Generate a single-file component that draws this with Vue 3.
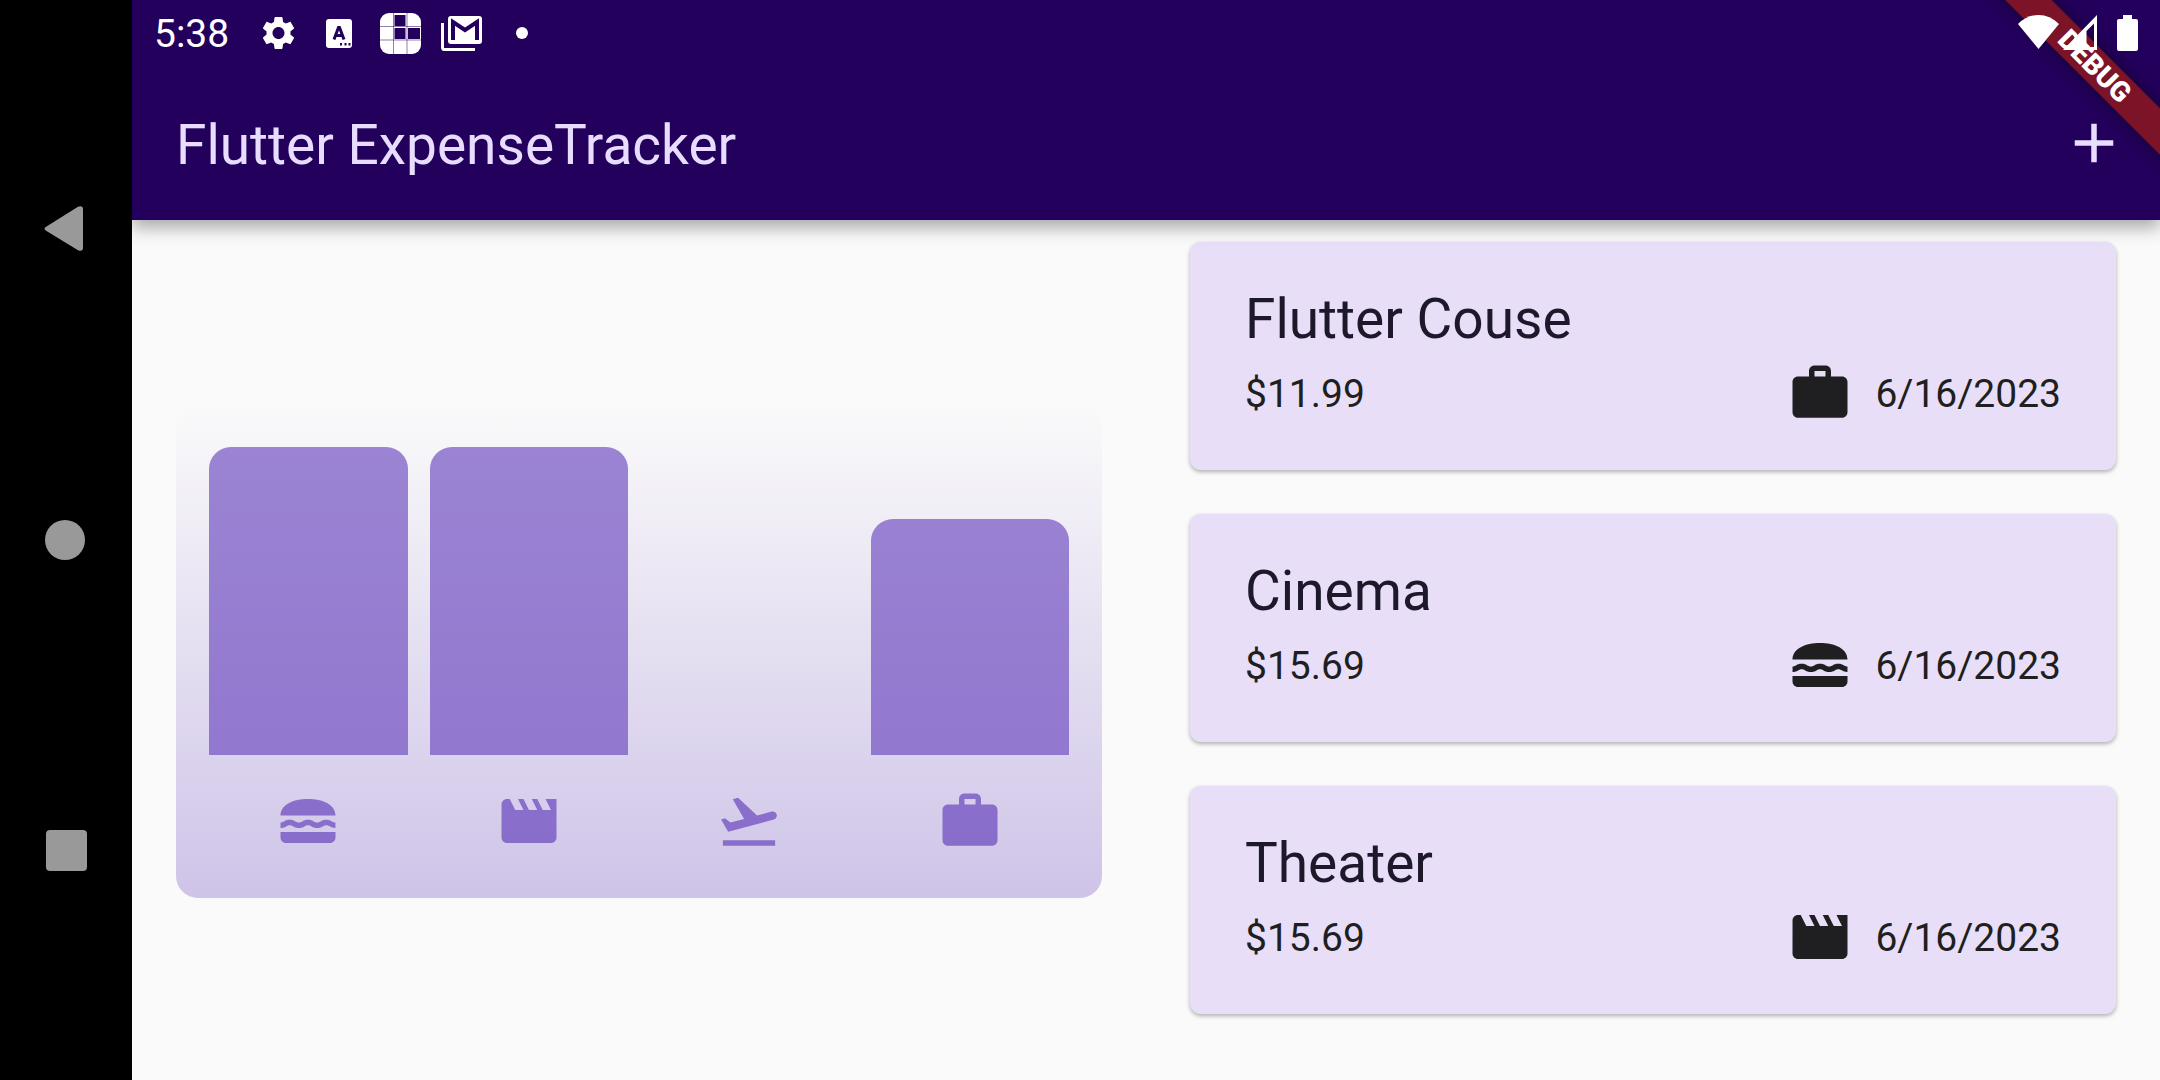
<script setup>
const icons = {
  food: 'M2 16h20v2c0 1.100-.9 2-2 2H4c-1.100 0-2-.9-2-2v-2zM18.660 11.500c-1.950 0-2.090 1-3.330 1-1.190 0-1.420-1-3.330-1-1.950 0-2.090 1-3.330 1-1.190 0-1.420-1-3.330-1-1.950 0-2.090 1-3.330 1v2c1.900 0 2.170-1 3.350-1 1.190 0 1.420 1 3.330 1 1.950 0 2.090-1 3.330-1 1.190 0 1.420 1 3.330 1 1.950 0 2.090-1 3.330-1 1.190 0 1.400.98 3.310 1v-1.980c-1.190 0-1.420-1.020-3.340-1.020zM22 9.990C22.020 6 17.280 4 12 4S2 6 2 10h20z',
  leisure: 'M18 4l2 4h-3l-2-4h-2l2 4h-3l-2-4H8l2 4H7L5 4H4c-1.100 0-1.990.9-1.990 2L2 18c0 1.100.9 2 2 2h16c1.100 0 2-.9 2-2V4h-4z',
  travel: 'M2.500 19h19v2h-19v-2zm19.570-9.360c-.21-.8-1.040-1.280-1.840-1.060L14.920 10l-6.900-6.430-1.930.51 4.140 7.170-4.970 1.330-1.970-1.540-1.450.39 2.590 4.490L21 11.490c.81-.23 1.280-1.050 1.070-1.850z',
  work: 'M20 6h-4V4c0-1.110-.89-2-2-2h-4c-1.110 0-2 .89-2 2v2H4c-1.110 0-2 .89-2 2v11c0 1.110.89 2 2 2h16c1.110 0 2-.89 2-2V8c0-1.110-.89-2-2-2zm-6 0h-4V4h4v2z',
}

const expenses = [
  { title: 'Flutter Couse', amount: 11.99, category: 'work', date: '6/16/2023' },
  { title: 'Cinema', amount: 15.69, category: 'food', date: '6/16/2023' },
  { title: 'Theater', amount: 15.69, category: 'leisure', date: '6/16/2023' },
]

const totals = ['food', 'leisure', 'travel', 'work'].map((category) => ({
  category,
  total: expenses.filter((e) => e.category === category).reduce((sum, e) => sum + e.amount, 0),
}))
const maxTotal = Math.max(...totals.map((t) => t.total))
</script>

<template>
  <div class="device">
    <nav class="system-nav" aria-label="System navigation">
      <button type="button" aria-label="Back">
        <svg width="48" height="48" viewBox="0 0 48 48"><path d="M4.500 21.500L36 1.800Q41 0 41 4.500V42.500Q41 47 36 45.200L4.500 26Q.5 23.700 4.500 21.500Z" /></svg>
      </button>
      <button type="button" aria-label="Home">
        <svg width="48" height="48" viewBox="0 0 48 48"><circle cx="23" cy="24" r="20" /></svg>
      </button>
      <button type="button" aria-label="Overview">
        <svg width="48" height="48" viewBox="0 0 48 48"><rect x="4" y="3" width="41" height="41" rx="4" /></svg>
      </button>
    </nav>

    <div class="app">
      <header class="top">
        <div class="banner-clip"><div class="banner">DEBUG</div></div>
        <div class="status">
          <time>5:38</time>
          <div class="notifications">
            <svg viewBox="0 0 61 66">
              <path transform="translate(10.500 13) scale(1.667)" d="M19.140 12.940c.04-.3.06-.61.06-.94 0-.32-.02-.64-.07-.94l2.030-1.580c.18-.14.23-.41.12-.61l-1.920-3.320c-.12-.22-.37-.29-.59-.22l-2.390.96c-.5-.38-1.030-.7-1.620-.94l-.36-2.540c-.04-.24-.24-.41-.48-.41h-3.840c-.24 0-.43.17-.47.41l-.36 2.540c-.59.24-1.130.57-1.620.94l-2.390-.96c-.22-.08-.47 0-.59.22L2.740 8.870c-.12.21-.08.47.12.61l2.030 1.580c-.05.3-.09.63-.09.94s.02.64.07.94l-2.030 1.580c-.18.14-.23.41-.12.61l1.920 3.320c.12.22.37.29.59.22l2.390-.96c.5.38 1.030.7 1.620.94l.36 2.540c.05.24.24.41.48.41h3.840c.24 0 .44-.17.47-.41l.36-2.540c.59-.24 1.130-.56 1.620-.94l2.390.96c.22.08.47 0 .59-.22l1.920-3.320c.12-.22.07-.47-.12-.61l-2.010-1.580zM12 15.600c-1.980 0-3.600-1.620-3.600-3.600s1.620-3.600 3.600-3.600 3.600 1.620 3.600 3.600-1.620 3.600-3.600 3.600z" />
            </svg>
            <svg viewBox="0 0 61 66">
              <rect x="17" y="19" width="26" height="29" rx="3" />
              <path class="line" d="M25 39.500L29.500 27.500H30.500L35 39.500M27 35.500H33" stroke-width="3" />
              <path class="cut" d="M31 43h2v2.500h-2zM35.500 43h2v2.500h-2zM39.500 43h2v2.500h-2z" />
            </svg>
            <svg viewBox="0 0 61 66">
              <rect x="10" y="13" width="41" height="41" rx="9" />
              <path class="cut" d="M24.500 15h11v11h-11zM24.500 28h11v11h-11zM38 28h12v11H38z" />
              <path class="line" d="M23.500 13V54M37 13V54M10 26.500H51M10 40H51" stroke-width="1" opacity=".5" />
            </svg>
            <svg viewBox="0 0 61 66">
              <path d="M10 23v24q0 4 3 4h31v-3H13V23z" />
              <rect x="17" y="16" width="34" height="28" rx="3" />
              <path class="line" d="M22 40V22L34 30L46 22V40" stroke-width="4" />
            </svg>
            <svg viewBox="0 0 61 66"><circle cx="30" cy="33" r="6" /></svg>
          </div>
          <svg class="signals" viewBox="0 0 126 66">
            <path d="M24.500 49L4 24Q13 15 24.500 15T45 24Z" />
            <path fill-rule="evenodd" d="M49 50L83 15V50ZM72.500 31V47H80V23.500Z" />
            <path d="M109 15h9v4h4q2 0 2 2v28q0 2-2 2h-17q-2 0-2-2V21q0-2 2-2h4z" />
          </svg>
        </div>
        <div class="app-bar">
          <h1>Flutter ExpenseTracker</h1>
          <button type="button" aria-label="Add expense">
            <svg viewBox="0 0 24 24"><path d="M19 13h-6v6h-2v-6H5v-2h6V5h2v6h6v2z" /></svg>
          </button>
        </div>
      </header>

      <main class="content">
        <section class="chart" aria-label="Expenses by category">
          <div v-for="t in totals" :key="t.category" class="column">
            <div class="track">
              <div class="bar" :style="{ height: (t.total / maxTotal) * 100 + '%' }"></div>
            </div>
            <svg class="icon" viewBox="0 0 24 24"><path :d="icons[t.category]" /></svg>
          </div>
        </section>

        <ul class="list">
          <li v-for="e in expenses" :key="e.title" class="card">
            <h2>{{ e.title }}</h2>
            <div class="row">
              <span class="amount">${{ e.amount }}</span>
              <span class="when">
                <svg class="icon" viewBox="0 0 24 24"><path :d="icons[e.category]" /></svg>
                <time>{{ e.date }}</time>
              </span>
            </div>
          </li>
        </ul>
      </main>
    </div>
  </div>
</template>

<style>
body {
  background: #fafafa;
}
</style>

<style scoped>
.device {
  display: flex;
  min-height: 100vh;
  font-family: Roboto, sans-serif;
  font-size: 39px;
  color: #1f1f21;
}
button {
  display: flex;
  align-items: center;
  justify-content: center;
  padding: 0;
  border: 0;
  background: none;
}
svg {
  display: block;
  flex: none;
}
h1,
h2 {
  margin: 0;
  font-size: 55px;
  font-weight: 400;
  line-height: 67px;
}
time,
.amount {
  padding-top: 2px;
}
.icon {
  width: 66px;
  height: 66px;
}

.system-nav {
  flex: none;
  display: flex;
  flex-direction: column;
  box-sizing: border-box;
  width: 132px;
  padding: 73px 0;
  background: #000;
}
.system-nav button {
  flex: 1;
}
.system-nav svg {
  fill: #999;
}

.app {
  flex: 1;
  min-width: 0;
  display: flex;
  flex-direction: column;
  overflow: hidden;
}
.top {
  position: relative;
  background: #23005c;
  color: #e8ddff;
  box-shadow: 0 8px 16px rgba(0, 0, 0, 0.32);
}
.status {
  position: relative;
  display: flex;
  align-items: center;
  height: 66px;
  padding: 0 20px 0 22px;
  color: #fff;
}
.status svg {
  fill: #fff;
}
.notifications {
  display: flex;
  flex: 1;
  padding-left: 19px;
}
.notifications svg {
  width: 61px;
  height: 66px;
}
.notifications .cut {
  fill: #23005c;
}
.notifications .line {
  fill: none;
  stroke: #23005c;
}
.signals {
  width: 126px;
  height: 66px;
}
.app-bar {
  display: flex;
  align-items: center;
  justify-content: space-between;
  height: 154px;
  padding: 0 33px 0 44px;
}
.app-bar h1 {
  padding-top: 4px;
}
.app-bar button {
  position: relative;
}
.app-bar svg {
  width: 66px;
  height: 66px;
  fill: #e8ddff;
}
.banner-clip {
  position: absolute;
  top: 0;
  right: 0;
  width: 220px;
  height: 220px;
  overflow: hidden;
}
.banner {
  position: absolute;
  top: 49px;
  left: 4px;
  box-sizing: border-box;
  width: 300px;
  height: 33px;
  padding-left: 2px;
  transform: rotate(45deg);
  background: #7c1326;
  box-shadow: 0 0 16px rgba(0, 0, 0, 0.5);
  color: #fff;
  font-size: 28px;
  font-weight: 900;
  line-height: 33px;
  text-align: center;
}

.content {
  flex: 1;
  display: grid;
  grid-template-columns: 1fr 1fr;
  align-items: center;
}
.chart {
  display: flex;
  box-sizing: border-box;
  height: 495px;
  margin: 0 44px;
  padding: 44px 22px;
  border-radius: 22px;
  background: linear-gradient(to top, rgba(106, 70, 190, 0.3), rgba(106, 70, 190, 0));
}
.column {
  flex: 1;
  display: flex;
  flex-direction: column;
  align-items: center;
  gap: 33px;
  padding: 0 11px;
}
.track {
  flex: 1;
  display: flex;
  align-items: flex-end;
  align-self: stretch;
}
.bar {
  width: 100%;
  border-radius: 22px 22px 0 0;
  background: rgba(106, 70, 190, 0.65);
}
.chart .icon {
  fill: rgba(106, 70, 190, 0.7);
}

.list {
  align-self: start;
  display: flex;
  flex-direction: column;
  gap: 44px;
  margin: 0;
  padding: 22px 44px;
  list-style: none;
}
.card {
  padding: 44px 55px;
  border-radius: 11px;
  background: #e8def7;
  box-shadow: 0 2px 4px rgba(0, 0, 0, 0.3);
}
.card h2 {
  margin-bottom: 7px;
  color: #1d192b;
}
.row,
.when {
  display: flex;
  align-items: center;
}
.row {
  justify-content: space-between;
}
.when {
  gap: 22px;
}
.row .icon {
  fill: #1f1f21;
}
</style>
